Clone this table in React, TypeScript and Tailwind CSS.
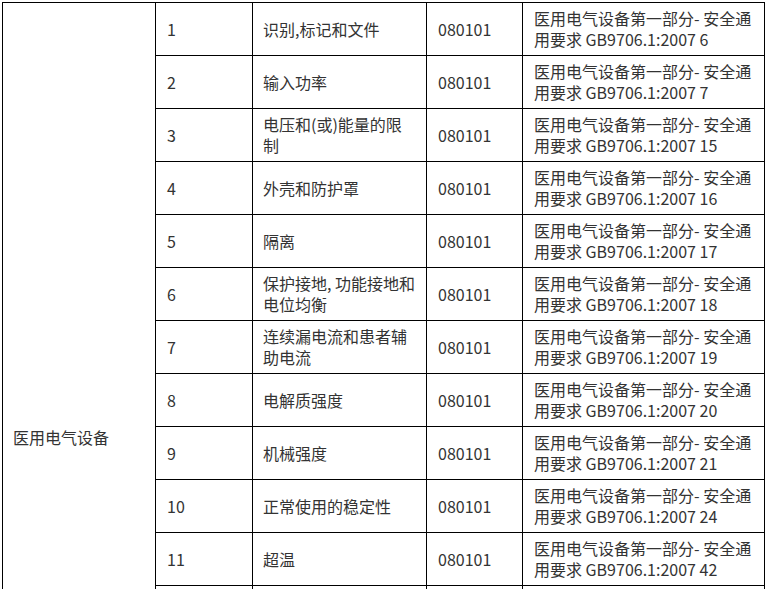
import React from 'react';

type Row = {
  no: string;
  item: string[];
  code: string;
  clause: string;
};

const STD = '医用电气设备第一部分- 安全通';
const STD2 = '用要求 GB9706.1:2007';

const rows: Row[] = [
  { no: '1', item: ['识别,标记和文件'], code: '080101', clause: '6' },
  { no: '2', item: ['输入功率'], code: '080101', clause: '7' },
  { no: '3', item: ['电压和(或)能量的限', '制'], code: '080101', clause: '15' },
  { no: '4', item: ['外壳和防护罩'], code: '080101', clause: '16' },
  { no: '5', item: ['隔离'], code: '080101', clause: '17' },
  { no: '6', item: ['保护接地, 功能接地和', '电位均衡'], code: '080101', clause: '18' },
  { no: '7', item: ['连续漏电流和患者辅', '助电流'], code: '080101', clause: '19' },
  { no: '8', item: ['电解质强度'], code: '080101', clause: '20' },
  { no: '9', item: ['机械强度'], code: '080101', clause: '21' },
  { no: '10', item: ['正常使用的稳定性'], code: '080101', clause: '24' },
  { no: '11', item: ['超温'], code: '080101', clause: '42' },
  { no: '12', item: ['防火'], code: '080101', clause: '43' },
  { no: '13', item: ['溢流, 液体泼洒, 泄漏,', '受潮'], code: '080101', clause: '44' },
  { no: '14', item: ['元器件和组件'], code: '080101', clause: '56' },
  { no: '15', item: ['网电源部分, 元器件和', '布局'], code: '080101', clause: '57' },
  { no: '16', item: ['结构和布线'], code: '080101', clause: '59' },
];

function Lines({ lines }: { lines: string[] }) {
  return (
    <>
      {lines.map((l, i) => (
        <div key={i}>{l}</div>
      ))}
    </>
  );
}

export default function App() {
  const cell = 'border border-black px-[10px] align-middle h-[53px]';
  return (
    <div
      className="bg-white min-h-screen pl-[2px] pt-[2px] overflow-hidden text-[#333] text-[16px] leading-[21px]"
      style={{ fontFamily: '"Noto Sans CJK SC", "Noto Sans", sans-serif' }}
    >
      <table className="border-collapse table-fixed w-[762px]">
        <colgroup>
          <col className="w-[153px]" />
          <col className="w-[97px]" />
          <col className="w-[174px]" />
          <col className="w-[96px]" />
          <col className="w-[242px]" />
        </colgroup>
        <tbody>
          {rows.map((r, i) => (
            <tr key={r.no}>
              {i === 0 && (
                <td rowSpan={rows.length + 1} className="border border-black px-[10px] align-middle">
                  医用电气设备
                </td>
              )}
              <td className={cell + ' pl-[11px]'}>{r.no}</td>
              <td className={cell}>
                <Lines lines={r.item} />
              </td>
              <td className={cell + ' pl-[11px]'}>{r.code}</td>
              <td className={cell + ' pl-[11px] whitespace-nowrap'}>
                <div>{STD}</div>
                <div>
                  {STD2} {r.clause}
                </div>
              </td>
            </tr>
          ))}
          <tr>
            <td className="border border-black h-[22px]" />
            <td className="border border-black h-[22px]" />
            <td className="border border-black h-[22px]" />
            <td className="border border-black h-[22px]" />
          </tr>
        </tbody>
      </table>
    </div>
  );
}
